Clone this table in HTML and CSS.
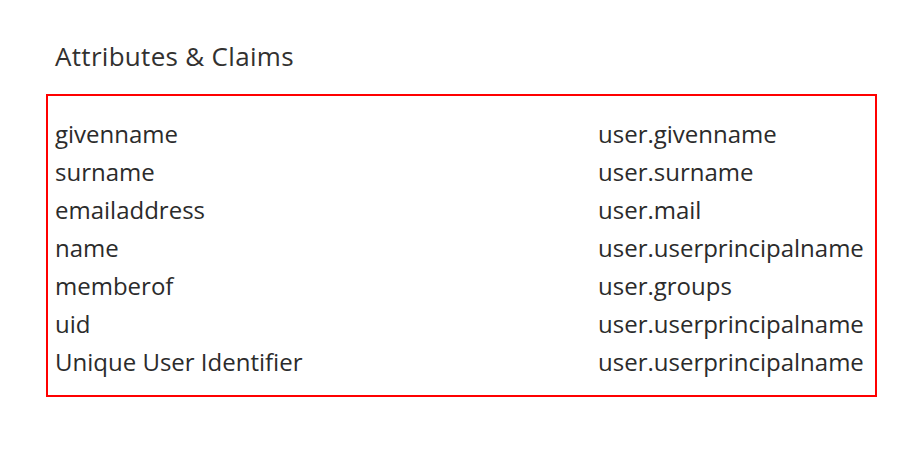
FILE: index.html
```html
<!DOCTYPE html>
<html>
<head>
<meta charset="utf-8">
<link rel="stylesheet" href="styles.css">
</head>
<body>
<div class="page">
  <h1 class="title">Attributes &amp; Claims</h1>
  <div class="box">
    <div class="row"><span class="name">givenname</span><span class="value">user.givenname</span></div>
    <div class="row"><span class="name">surname</span><span class="value">user.surname</span></div>
    <div class="row"><span class="name">emailaddress</span><span class="value">user.mail</span></div>
    <div class="row"><span class="name">name</span><span class="value">user.userprincipalname</span></div>
    <div class="row"><span class="name">memberof</span><span class="value">user.groups</span></div>
    <div class="row"><span class="name">uid</span><span class="value">user.userprincipalname</span></div>
    <div class="row"><span class="name">Unique User Identifier</span><span class="value">user.userprincipalname</span></div>
  </div>
</div>
</body>
</html>
```
FILE: styles.css
```css
html, body { margin: 0; padding: 0; background: #fff; }
body { font-family: "Open Sans", "Noto Sans", sans-serif; color: #2b2b2b; }
.page { padding: 40px 42px 0 46px; width: 831px; }
.title { margin: 0 0 22px 9px; font-size: 26px; font-weight: 400; line-height: 32px; letter-spacing: 0.3px; color: #323130; }
.box { border: 2px solid #ff0000; box-sizing: border-box; height: 303px; padding: 19px 0 0 7px; }
.row { display: grid; grid-template-columns: 543px 1fr; height: 38px; line-height: 38px; font-size: 24px; }
```
